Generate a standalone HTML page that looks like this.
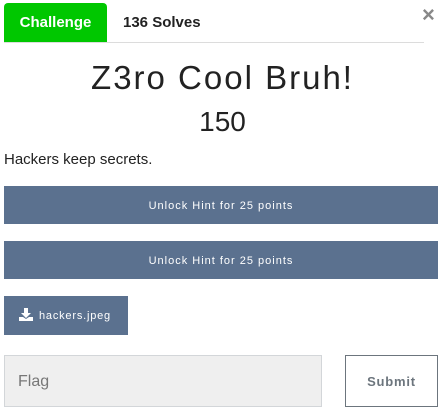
<!DOCTYPE html>
<html><head><style>
body{margin:0;width:445px;height:411px;background:#fff;font-family:"Liberation Sans",sans-serif;position:relative;overflow:hidden;color:#212529}
div{position:absolute;box-sizing:border-box}
</style></head><body>
<div style="left:4px;top:3px;width:103px;height:40px;background:#00c700;border-radius:4px 4px 0 0;color:#fff;font-weight:bold;font-size:15px;line-height:40px;text-align:center">Challenge</div>
<div style="left:123px;top:3px;height:40px;line-height:40px;font-weight:bold;font-size:15px;color:#222">136 Solves</div>
<div style="left:4px;top:42px;width:420px;height:1px;background:#dcdcdc"></div>
<div style="left:422px;top:2px;font-size:22px;color:#888;font-weight:bold">×</div>
<div style="left:0;width:445px;top:59px;text-align:center;font-size:33px;font-weight:300;letter-spacing:2px;color:#222">Z3ro Cool Bruh!</div>
<div style="left:0;width:445px;top:106px;text-align:center;font-size:28px;color:#222">150</div>
<div style="left:4px;top:151px;font-size:15px;color:#222">Hackers keep secrets.</div>
<div style="left:4px;top:186px;width:434px;height:38px;background:#5b718f;color:#fff;font-size:11px;letter-spacing:1px;text-align:center;line-height:40px">Unlock Hint for 25 points</div>
<div style="left:4px;top:241px;width:434px;height:38px;background:#5b718f;color:#fff;font-size:11px;letter-spacing:1px;text-align:center;line-height:40px">Unlock Hint for 25 points</div>
<div style="left:4px;top:296px;width:124px;height:39px;background:#5b718f;color:#fff;font-size:11px;letter-spacing:0.8px;line-height:41px;padding-left:35px">hackers.jpeg</div>
<svg style="position:absolute;left:19px;top:308px" width="14" height="13" viewBox="0 0 14 13"><path d="M5 0h4v5h3l-5 5-5-5h3z M0 9h4l3 2 3-2h4v4H0z" fill="#fff"/></svg>
<div style="left:4px;top:355px;width:318px;height:52px;background:#efefef;border:1px solid #d3d6d9;font-size:16px;color:#777;line-height:52px;padding-left:13px">Flag</div>
<div style="left:345px;top:355px;width:93px;height:52px;border:1px solid #6c757d;font-size:13px;font-weight:bold;letter-spacing:0.8px;color:#6c757d;text-align:center;line-height:52px">Submit</div>
</body></html>
